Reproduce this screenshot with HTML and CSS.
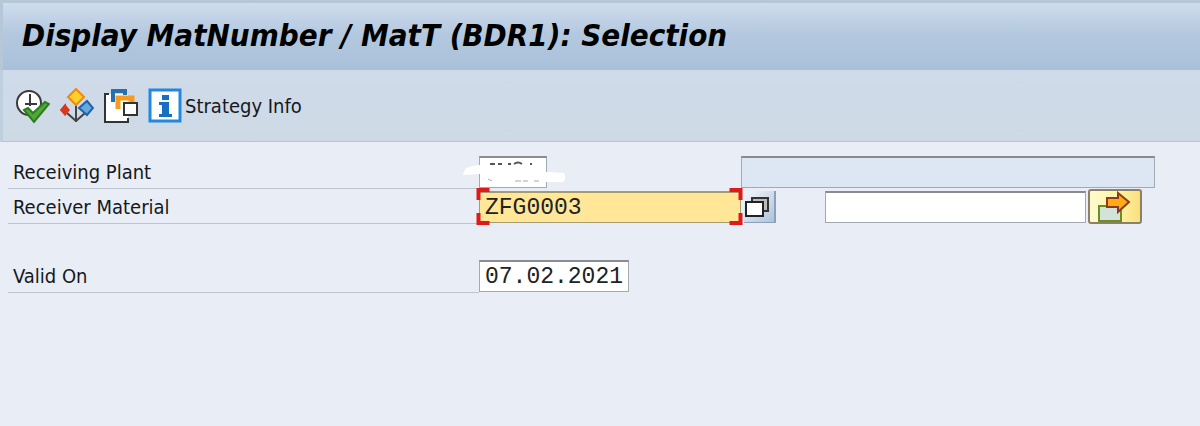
FILE: index.html
```html
<!DOCTYPE html>
<html lang="en">
<head>
  <meta charset="UTF-8">
  <meta name="viewport" content="width=device-width, initial-scale=1.0">
  <title>Display MatNumber / MatT (BDR1): Selection</title>
  <link rel="stylesheet" href="styles.css">
</head>
<body>
  <header class="title-bar">
    <h1>Display MatNumber / MatT (BDR1): Selection</h1>
  </header>

  <!-- Application toolbar -->
  <div class="toolbar">
    <button type="button" class="tool" aria-label="Execute">
      <svg width="34" height="36" viewBox="0 0 34 36">
        <circle cx="13" cy="15" r="12" fill="#fff" stroke="#3a3a3a" stroke-width="2"/>
        <path d="M14 6v12M9 16h12" fill="none" stroke="#3a3a3a" stroke-width="2"/>
        <path d="M8 22l4-2 5 5 12-11 4 2-15 18z" fill="#4fa838" stroke="#2c7d22" stroke-width="2"/>
      </svg>
    </button>
    <button type="button" class="tool" aria-label="Get variant">
      <svg width="34" height="36" viewBox="0 0 34 36">
        <path d="M16 16v18M7 25l9 8M25 25l-9 8" fill="none" stroke="#444" stroke-width="2"/>
        <path d="M16 1l8 8-8 8-8-8z" fill="#fdd02a" stroke="#ee8a12" stroke-width="2"/>
        <path d="M6 15v13l-6-6z" fill="#d9381e"/>
        <path d="M5 16l5 6-5 6-5-6z" fill="#d9381e"/>
        <path d="M27 13l6 7-6 7-8-7z" fill="#65a9dc" stroke="#1e63a4" stroke-width="2"/>
      </svg>
    </button>
    <button type="button" class="tool" aria-label="Multiple selection">
      <svg width="34" height="36" viewBox="0 0 34 36">
        <path d="M1 6h23v28H1z" fill="#fff"/>
        <path d="M5 6H1v28h23v-4" fill="none" stroke="#333" stroke-width="2"/>
        <path d="M9 14V3h12v4" fill="none" stroke="#2a70b0" stroke-width="4"/>
        <path d="M14 21V10h14v4" fill="none" stroke="#f59b20" stroke-width="5"/>
        <path d="M20 15h13v12H20z" fill="#fff" stroke="#333" stroke-width="2"/>
      </svg>
    </button>
    <button type="button" class="tool">
      <svg width="34" height="36" viewBox="0 0 34 36">
        <rect x="2" y="2" width="30" height="31" fill="#fff" stroke="#2288df" stroke-width="3"/>
        <path d="M14 7h7v5h-7zM11 14h10v12h3v3H11v-3h3v-9h-3z" fill="#1770c4"/>
      </svg>
      <span>Strategy Info</span>
    </button>
  </div>

  <form class="selection">
    <div class="row">
      <label for="plant">Receiving Plant</label>
      <div class="field">
        <input type="text" id="plant" class="plant">
        <!-- Masked plant code -->
        <svg class="mask" width="104" height="34" viewBox="0 0 104 34">
          <path d="M1 19q1-8 9-9l8-1V4h66v12l18 1q3 5-1 9H84v3H18V18z" fill="#fff"/>
          <path d="M28 8h5M36 8h4M46 8h3M52 8q4-3 8 0M69 7v2" fill="none" stroke="#555" stroke-width="2"/>
          <path d="M26 23l4 2M53 25h6M61 25h5M72 25h5" fill="none" stroke="#aaa" stroke-width="1"/>
        </svg>
      </div>
      <input type="text" class="plant-name" aria-label="Plant name" readonly>
    </div>

    <div class="row">
      <label for="material">Receiver Material</label>
      <div class="field focused">
        <input type="text" id="material" value="ZFG0003">
        <svg class="corners" width="266" height="37" viewBox="0 0 266 37">
          <path d="M13 2H2v10M2 25v10h11M253 2h11v10M264 25v10h-11" fill="none" stroke="#de1a1a" stroke-width="4"/>
        </svg>
      </div>
      <button type="button" class="match" aria-label="Search help">
        <svg width="28" height="30" viewBox="0 0 28 30">
          <path d="M8 6h16v13H8z" fill="#bbb" stroke="#333" stroke-width="2"/>
          <path d="M2 10h17v14H2z" fill="#fff" stroke="#222" stroke-width="2"/>
        </svg>
      </button>
      <div class="range">
        <input type="text" aria-label="Receiver Material to">
        <button type="button" class="more" aria-label="Multiple selection">
          <svg width="36" height="32" viewBox="0 0 36 32">
            <path d="M2 15h22v15H2z" fill="#d3e3dc" stroke="#6b8f1f" stroke-width="2"/>
            <path d="M10 7h11V2l11 9-11 10v-5H10z" fill="#fdab16" stroke="#8d3b1c" stroke-width="2"/>
          </svg>
        </button>
      </div>
    </div>

    <div class="row valid-row">
      <label for="valid">Valid On</label>
      <div class="field">
        <input type="text" id="valid" class="date" value="07.02.2021">
      </div>
    </div>
  </form>
</body>
</html>
```
FILE: styles.css
```css
* {
  margin: 0;
  padding: 0;
  box-sizing: border-box;
}

body {
  min-height: 100vh;
  background: #e9edf5;
  color: #15181c;
  font-family: Tahoma, "DejaVu Sans Condensed", "DejaVu Sans", sans-serif;
  font-size: 20px;
}

/* Title */
.title-bar {
  height: 70px;
  padding-left: 19px;
  border-top: 3px solid #b6c8d8;
  border-left: 3px solid #b6c8d8;
  background: linear-gradient(#d0dcee, #b4c9df 45%, #a8c0d9);
}

.title-bar h1 {
  color: #000;
  font-size: 31px;
  font-style: italic;
  line-height: 64px;
  white-space: nowrap;
}

/* Toolbar */
.toolbar {
  display: flex;
  align-items: center;
  gap: 10px;
  height: 72px;
  padding-left: 13px;
  border-left: 3px solid #c0cfdd;
  border-bottom: 1px solid #b9c6cf;
  background: linear-gradient(#d0daea, #cddae5);
}

button {
  border: none;
  background: none;
  color: inherit;
  font: inherit;
  cursor: pointer;
}

.tool {
  display: flex;
  align-items: center;
  gap: 3px;
}

/* Selection fields */
.selection {
  padding: 14px 45px 0 8px;
}

.row {
  display: grid;
  grid-template-columns: 471fr 262fr 84fr 330fr;
  height: 32px;
  margin-bottom: 3px;
}

.valid-row {
  margin-top: 37px;
}

label {
  padding-left: 5px;
  border-bottom: 1px solid #bcc5cd;
  line-height: 32px;
}

.field {
  position: relative;
}

input {
  width: 100%;
  height: 32px;
  padding: 0 5px;
  border: 1px solid #a3a9b0;
  border-top: 2px solid #888c92;
  background: #fff;
  color: #222;
  font-family: "Liberation Mono", monospace;
  font-size: 23px;
  outline: none;
}

.plant {
  width: 68px;
}

.plant-name {
  grid-column: 3 / 5;
  background: #dce7f3;
}

.date {
  width: 150px;
}

.focused input {
  border-color: #a59b70;
  background: #ffe797;
}

.mask {
  position: absolute;
  top: 0;
  left: -17px;
}

.corners {
  position: absolute;
  top: -3px;
  left: -3px;
  width: calc(100% + 5px);
}

.match {
  justify-self: start;
  width: 32px;
  height: 32px;
  margin-left: 3px;
  border-right: 2px solid #8da0bb;
  border-bottom: 1px solid #8da0bb;
  background: linear-gradient(135deg, #f3f7fb, #adc3dc);
}

.match svg {
  display: block;
}

.range {
  display: flex;
  gap: 2px;
  padding-right: 13px;
}

.range input {
  flex: 1;
  min-width: 0;
}

.more {
  display: flex;
  align-items: center;
  justify-content: center;
  flex: none;
  width: 54px;
  height: 35px;
  margin-top: -2px;
  border: 2px solid #8c8168;
  border-radius: 3px;
  background: linear-gradient(90deg, #fffbd0, #fdf3a0 60%, #fbdf7e);
}
```
